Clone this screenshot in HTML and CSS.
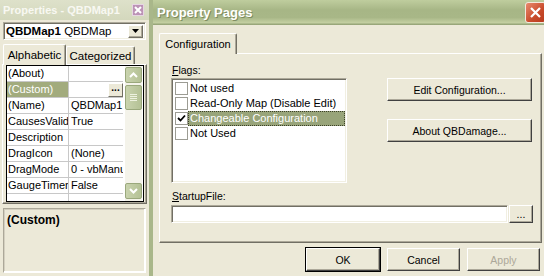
FILE: index.html
```html
<!doctype html>
<html lang="en">

<head>
    <meta charset="UTF-8">
    <title>Property Pages</title>
    <link rel="stylesheet" href="styles.css">
</head>

<body>
    <div class="props">
        <div class="props-title">
            <span>Properties - QBDMap1</span>
            <span class="tool-close">
                <svg width="12" height="12" viewBox="0 0 12 12"><path d="M3 3l6 6M9 3l-6 6" stroke="#fff" stroke-width="2"/></svg>
            </span>
        </div>
        <div class="combo">
            <span class="combo-text"><b>QBDMap1</b> QBDMap</span>
            <span class="combo-btn">
                <svg width="7" height="4" viewBox="0 0 7 4"><path d="M0 0h7L3.5 4z" fill="#000"/></svg>
            </span>
        </div>
        <div class="ptabs">
            <span class="ptab sel">Alphabetic</span>
            <span class="ptab">Categorized</span>
        </div>
        <div class="ppanel">
            <div class="grid">
                <div class="rows">
                    <div class="row"><span class="k">(About)</span><span class="v"></span></div>
                    <div class="row"><span class="k hl">(Custom)</span><span class="v"><span class="mini">...</span></span></div>
                    <div class="row"><span class="k">(Name)</span><span class="v">QBDMap1</span></div>
                    <div class="row"><span class="k">CausesValidation</span><span class="v">True</span></div>
                    <div class="row"><span class="k">Description</span><span class="v"></span></div>
                    <div class="row"><span class="k">DragIcon</span><span class="v">(None)</span></div>
                    <div class="row"><span class="k">DragMode</span><span class="v">0 - vbManual</span></div>
                    <div class="row"><span class="k">GaugeTimerInterval</span><span class="v">False</span></div>
                    <div class="row"><span class="k"></span><span class="v"></span></div>
                </div>
                <div class="vscroll">
                    <span class="sbtn">
                        <svg width="9" height="6" viewBox="0 0 9 6"><path d="M1 5l3.5-3.5L8 5" fill="none" stroke="#fff" stroke-width="2"/></svg>
                    </span>
                    <span class="thumb">
                        <svg width="7" height="7" viewBox="0 0 7 7"><path d="M0 .5h7M0 2.5h7M0 4.5h7M0 6.5h7" stroke="#eef2e0" stroke-width="1"/></svg>
                    </span>
                    <span class="track"></span>
                    <span class="sbtn">
                        <svg width="9" height="6" viewBox="0 0 9 6"><path d="M1 1l3.5 3.5L8 1" fill="none" stroke="#fff" stroke-width="2"/></svg>
                    </span>
                </div>
            </div>
        </div>
        <div class="desc"><b>(Custom)</b></div>
    </div>

    <div class="dlg">
        <div class="dlg-title">
            <span>Property Pages</span>
            <span class="dlg-close">
                <svg width="13" height="13" viewBox="0 0 13 13"><path d="M2 2l9 9M11 2l-9 9" stroke="#fff" stroke-width="2.2"/></svg>
            </span>
        </div>
        <div class="dlg-body">
            <div class="tabs"><span class="tab">Configuration</span></div>
            <div class="panel">
                <div class="top">
                    <div class="flags">
                        <div class="label"><u>F</u>lags:</div>
                        <div class="list">
                            <div class="item"><span class="cb"></span><span class="txt">Not used</span></div>
                            <div class="item"><span class="cb"></span><span class="txt">Read-Only Map (Disable Edit)</span></div>
                            <div class="item">
                                <span class="cb"><svg width="9" height="9" viewBox="0 0 9 9"><path d="M1 4l2.5 2.5L8 1.5" fill="none" stroke="#000" stroke-width="1.8"/></svg></span>
                                <span class="txt sel">Changeable Configuration</span>
                            </div>
                            <div class="item"><span class="cb"></span><span class="txt">Not Used</span></div>
                        </div>
                    </div>
                    <div class="side">
                        <span class="btn wide">Edit Configuration...</span>
                        <span class="btn wide">About QBDamage...</span>
                    </div>
                </div>
                <div class="label startup"><u>S</u>tartupFile:</div>
                <div class="file">
                    <span class="input"></span>
                    <span class="btn dots">...</span>
                </div>
            </div>
            <div class="actions">
                <span class="btn default">OK</span>
                <span class="btn">Cancel</span>
                <span class="btn off">Apply</span>
            </div>
        </div>
    </div>
</body>

</html>
```

FILE: styles.css
```css
* {
    margin: 0;
    padding: 0;
    box-sizing: border-box;
}

body {
    width: 544px;
    height: 276px;
    overflow: hidden;
    display: flex;
    background: #ECE9D8;
    font: 10.5px "Liberation Sans", Arial, sans-serif;
    color: #000;
}

/* properties tool window */
.props {
    flex-shrink: 0;
    width: 149px;
    height: 276px;
    display: flex;
    flex-direction: column;
    font-size: 11px;
}

.props-title {
    height: 20px;
    display: flex;
    align-items: center;
    justify-content: space-between;
    padding: 0 5px 0 3px;
    background: linear-gradient(#DEE1CA, #D4D8BD);
    color: #F8F8F2;
    font-weight: bold;
    font-size: 11px;
}

.tool-close {
    width: 12px;
    height: 12px;
    display: flex;
    background: #BC93B6;
    border: 1px solid #E6D5E2;
}

.tool-close svg {
    margin: -1px;
}

.combo {
    width: 143px;
    height: 18px;
    margin: 2px 0 4px 3px;
    display: flex;
    align-items: center;
    justify-content: space-between;
    background: #fff;
    border: 1px solid;
    border-color: #ACA899 #fff #fff #ACA899;
    box-shadow: inset 1px 1px #716F64, inset -1px -1px #F1EFE2;
    padding: 0 2px 0 2px;
}

.combo-text {
    font-size: 11.5px;
    white-space: nowrap;
}

.combo-btn {
    width: 15px;
    height: 13px;
    display: flex;
    align-items: center;
    justify-content: center;
    background: #ECE9D8;
    border: 1px solid;
    border-color: #fff #716F64 #716F64 #fff;
    box-shadow: inset -1px -1px #ACA899;
}

.ptabs {
    height: 20px;
    display: flex;
    align-items: flex-end;
    margin-left: 3px;
}

.ptab {
    height: 18px;
    width: 69px;
    display: flex;
    align-items: center;
    justify-content: center;
    font-size: 11.5px;
    border: 1px solid;
    border-bottom: 0;
    border-color: #fff #716F64 #fff #fff;
    box-shadow: inset -1px 0 #ACA899;
    border-radius: 2px 2px 0 0;
}

.ptab.sel {
    width: 63px;
    height: 21px;
    margin-bottom: -1px;
    position: relative;
    background: #ECE9D8;
}

.ppanel {
    width: 145px;
    height: 140px;
    margin-left: 2px;
    border: 1px solid;
    border-color: #fff #716F64 #716F64 #fff;
    box-shadow: inset -1px -1px #ACA899;
    padding: 0 2px 0 3px;
}

.grid {
    width: 138px;
    height: 137px;
    border: 1px solid #000;
    background: #fff;
    display: flex;
    overflow: hidden;
}

.rows {
    width: 116px;
}

.row {
    height: 16px;
    display: flex;
    border-bottom: 1px solid #C8C8C8;
    line-height: 15px;
}

.row .k {
    width: 62px;
    border-right: 1px solid #C8C8C8;
    padding-left: 1px;
    white-space: nowrap;
    overflow: hidden;
}

.row .k.hl {
    background: #A2AB7D;
    color: #fff;
}

.row .v {
    flex: 1;
    padding-left: 2px;
    white-space: nowrap;
    overflow: hidden;
    display: flex;
}

.row .v .mini {
    margin-left: auto;
    width: 15px;
    height: 14px;
    margin-top: 1px;
    font-weight: bold;
    font-size: 10px;
    line-height: 8px;
    text-align: center;
    background: #ECE9D8;
    border: 1px solid;
    border-color: #fff #716F64 #716F64 #fff;
}

.vscroll {
    width: 17px;
    margin-left: 2px;
    display: flex;
    flex-direction: column;
    background: #F4F3EA;
    padding: 1px 0 2px;
}

.sbtn,
.thumb {
    height: 16px;
    display: flex;
    align-items: center;
    justify-content: center;
    background: linear-gradient(90deg, #C9D3AE, #B4C195);
    border: 1px solid #9AA87C;
    border-radius: 2px;
}

.thumb {
    height: 25px;
    margin-top: 2px;
}

.track {
    flex: 1;
}

.desc {
    width: 143px;
    height: 65px;
    margin: 4px 0 0 3px;
    border: 1px solid;
    border-color: #ACA899 #fff #fff #ACA899;
    box-shadow: inset -1px -1px #fff, inset 1px 1px #D4D0C0;
    padding: 4px 3px;
    font-size: 12px;
}

/* property pages dialog */
.dlg {
    flex-shrink: 0;
    width: 400px;
    height: 276px;
    border-left: 4px solid #A9B78A;
}

.dlg-title {
    height: 25px;
    display: flex;
    align-items: center;
    justify-content: space-between;
    padding: 0 3px 1px 4px;
    background: linear-gradient(#BFCD9E 0, #A7B686 40%, #A8B787 70%, #C2CEA0 90%, #8E9D70 100%);
    color: #fff;
    font-weight: bold;
    font-size: 13px;
    text-shadow: 1px 1px #7E8C60;
}

.dlg-close {
    width: 21px;
    height: 21px;
    display: flex;
    align-items: center;
    justify-content: center;
    background: linear-gradient(135deg, #E98A6E, #C84A2A 60%, #B83A1E);
    border: 1px solid #F4E8DC;
    border-radius: 3px;
}

.dlg-body {
    padding: 8px 0 0 6px;
}

.tabs {
    height: 20px;
    display: flex;
    align-items: flex-end;
}

.tab {
    width: 78px;
    height: 21px;
    margin-bottom: -1px;
    position: relative;
    display: flex;
    align-items: center;
    justify-content: center;
    font-size: 11px;
    background: #ECE9D8;
    border: 1px solid;
    border-bottom: 0;
    border-color: #fff #716F64 #fff #fff;
    box-shadow: inset -1px 0 #ACA899;
    border-radius: 2px 2px 0 0;
}

.panel {
    width: 383px;
    height: 190px;
    border: 1px solid;
    border-color: #fff #716F64 #716F64 #fff;
    box-shadow: inset -1px -1px #ACA899;
    padding: 10px 0 0 11px;
}

.top {
    display: flex;
}

.label {
    height: 13px;
    line-height: 13px;
    padding-left: 1px;
    margin-bottom: 1px;
}

.list {
    width: 176px;
    height: 105px;
    background: #fff;
    border: 1px solid;
    border-color: #ACA899 #fff #fff #ACA899;
    box-shadow: inset 1px 1px #716F64, inset -1px -1px #F1EFE2;
    padding: 2px 1px 0 1px;
}

.item {
    height: 15px;
    display: flex;
    align-items: center;
}

.cb {
    width: 13px;
    height: 13px;
    margin-left: 2px;
    display: flex;
    align-items: center;
    justify-content: center;
    border: 1px solid #9C9C94;
    background: #fff;
}

.txt {
    flex: 1;
    height: 15px;
    line-height: 13px;
    padding-left: 1px;
    border: 1px solid transparent;
    font-size: 11px;
}

.txt.sel {
    background: #98A47A;
    color: #fff;
    border: 1px dotted #3C4028;
}

.side {
    display: flex;
    flex-direction: column;
    gap: 18px;
    margin: 14px 0 0 40px;
}

.btn {
    width: 73px;
    height: 23px;
    display: flex;
    align-items: center;
    justify-content: center;
    background: #ECE9D8;
    border: 1px solid;
    border-color: #fff #404040 #404040 #fff;
    box-shadow: inset -1px -1px #ACA899;
}

.btn.wide {
    width: 145px;
}

.startup {
    margin-top: 7px;
    margin-bottom: 2px;
}

.file {
    display: flex;
    gap: 1px;
}

.input {
    width: 337px;
    height: 18px;
    background: #fff;
    border: 1px solid;
    border-color: #ACA899 #fff #fff #ACA899;
    box-shadow: inset 1px 1px #716F64, inset -1px -1px #F1EFE2;
}

.btn.dots {
    width: 24px;
    height: 18px;
    line-height: 10px;
}

.actions {
    width: 383px;
    display: flex;
    justify-content: flex-end;
    gap: 7px;
    margin-top: 5px;
    padding-right: 2px;
}

.btn.default {
    width: 74px;
    outline: 1px solid #000;
}

.btn.off {
    color: #ACA899;
}
```
